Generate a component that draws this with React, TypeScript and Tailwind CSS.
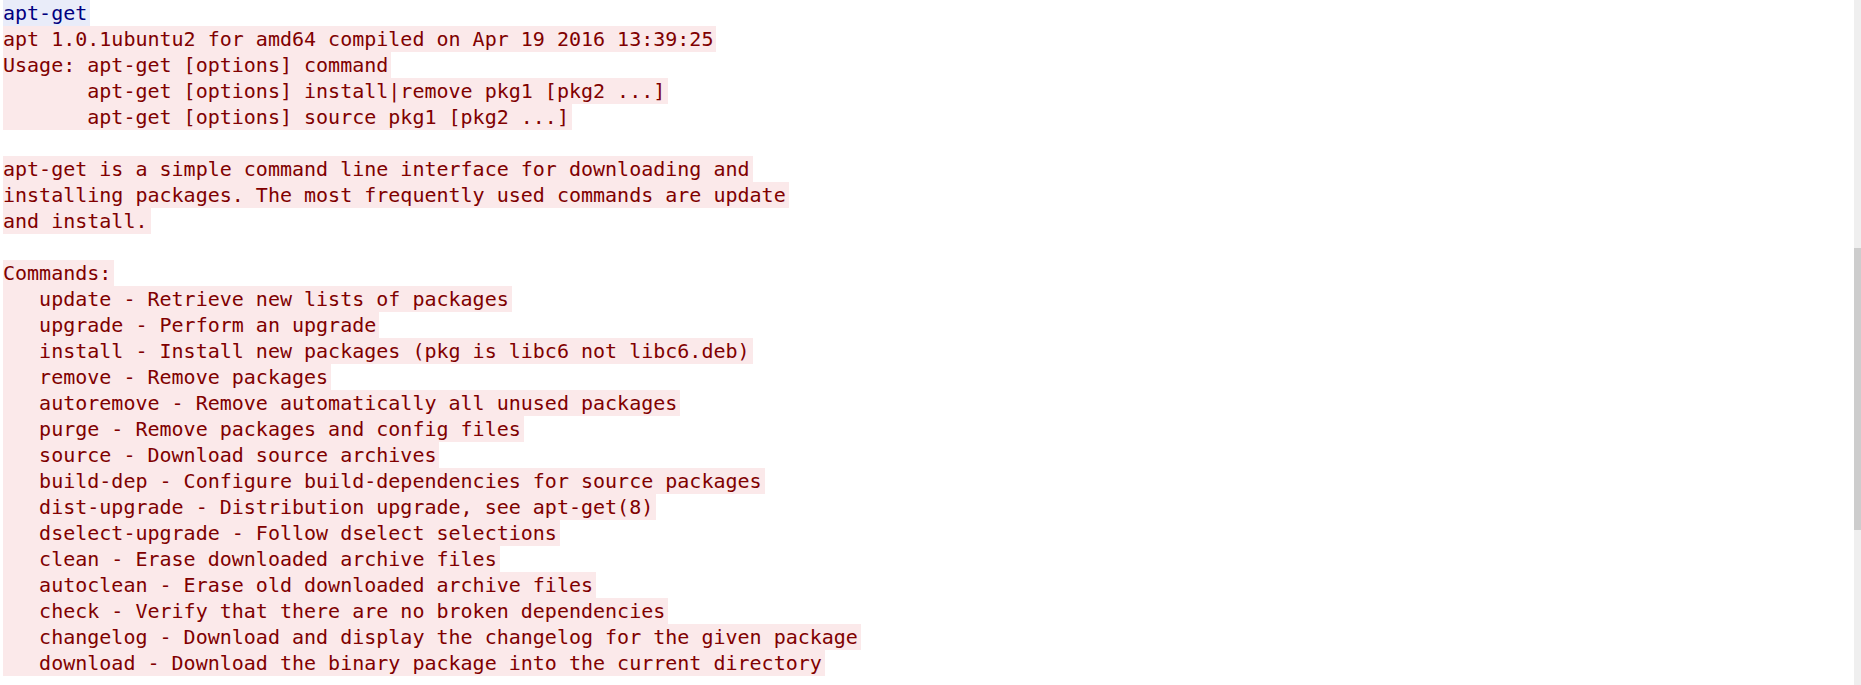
import clsx from 'clsx'

type Line = {
  text: string
  kind?: 'cmd' | 'out' | 'blank'
}

const lines: Line[] = [
  { text: 'apt-get', kind: 'cmd' },
  { text: 'apt 1.0.1ubuntu2 for amd64 compiled on Apr 19 2016 13:39:25' },
  { text: 'Usage: apt-get [options] command' },
  { text: '       apt-get [options] install|remove pkg1 [pkg2 ...]' },
  { text: '       apt-get [options] source pkg1 [pkg2 ...]' },
  { text: '', kind: 'blank' },
  { text: 'apt-get is a simple command line interface for downloading and' },
  { text: 'installing packages. The most frequently used commands are update' },
  { text: 'and install.' },
  { text: '', kind: 'blank' },
  { text: 'Commands:' },
  { text: '   update - Retrieve new lists of packages' },
  { text: '   upgrade - Perform an upgrade' },
  { text: '   install - Install new packages (pkg is libc6 not libc6.deb)' },
  { text: '   remove - Remove packages' },
  { text: '   autoremove - Remove automatically all unused packages' },
  { text: '   purge - Remove packages and config files' },
  { text: '   source - Download source archives' },
  { text: '   build-dep - Configure build-dependencies for source packages' },
  { text: '   dist-upgrade - Distribution upgrade, see apt-get(8)' },
  { text: '   dselect-upgrade - Follow dselect selections' },
  { text: '   clean - Erase downloaded archive files' },
  { text: '   autoclean - Erase old downloaded archive files' },
  { text: '   check - Verify that there are no broken dependencies' },
  { text: '   changelog - Download and display the changelog for the given package' },
  { text: '   download - Download the binary package into the current directory' },
]

const OutputLine = ({ text, kind = 'out' }: Line) => {
  if (kind === 'blank') return <div className="h-[26px]" />
  return (
    <div
      className={clsx(
        'h-[26px] w-fit whitespace-pre pr-[3px] leading-[26px]',
        kind === 'cmd'
          ? 'bg-[#e9ecf9] text-[#000080]'
          : 'bg-[#fbe9ea] text-[#800000]'
      )}
    >
      {text}
    </div>
  )
}

const App = () => {
  return (
    <div className="flex h-[685px] w-full overflow-hidden bg-white">
      <div
        className="flex-1 pl-[3px] text-[20px]"
        style={{ fontFamily: '"DejaVu Sans Mono", "Liberation Mono", monospace' }}
      >
        {lines.map((line, index) => (
          <OutputLine key={index} {...line} />
        ))}
      </div>
      <div className="flex w-[7px] flex-col bg-[#efefef]">
        <div className="h-[248px]" />
        <div className="h-[282px] bg-[#cdcdcd]" />
      </div>
    </div>
  )
}

export default App
